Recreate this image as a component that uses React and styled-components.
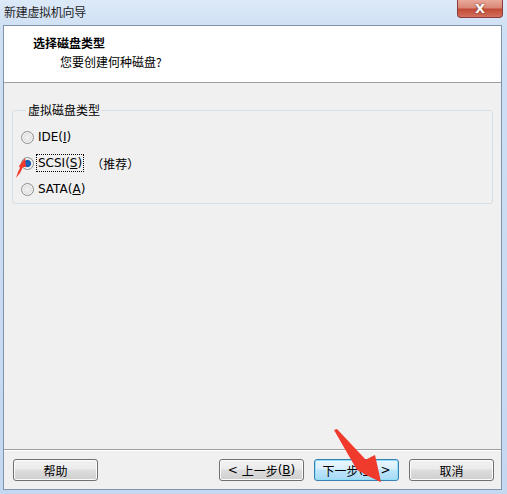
import React from "react";
import styled, { createGlobalStyle } from "styled-components";

const Global = createGlobalStyle`
  html, body { margin: 0; padding: 0; }
  body { width: 507px; height: 494px; overflow: hidden; background: #c9ddf3; }
`;

const cn = `"Noto Sans CJK SC", "Liberation Sans", sans-serif`;
const lat = `"DejaVu Sans", "Liberation Sans", "Noto Sans CJK SC", sans-serif`;

const Window = styled.div`
  position: relative;
  width: 507px;
  height: 494px;
  box-sizing: border-box;
  display: flex;
  flex-direction: column;
  padding: 0 5px 4px 3px;
  background: linear-gradient(180deg, #dce9f8 0px, #cfe0f4 30px, #c4d8f0 100%);
  font-family: ${cn};
  font-size: 12px;
  color: #000;
`;

const TitleBar = styled.div`
  height: 25px;
  display: flex;
  align-items: flex-start;
  justify-content: space-between;
`;

const TitleText = styled.span`
  margin: 4px 0 0 1px;
  font-size: 12px;
  line-height: 16px;
  color: #1e1e1e;
  letter-spacing: -0.3px;
`;

const CloseBtn = styled.div`
  width: 46px;
  height: 18px;
  margin-right: -1px;
  box-sizing: border-box;
  border: 1px solid #8a3c3c;
  border-top: none;
  border-radius: 0 0 4px 4px;
  background: linear-gradient(180deg, #e9a99c 0%, #d98877 45%, #c24a36 55%, #d2705e 100%);
  display: flex;
  align-items: center;
  justify-content: center;
  color: #fff;
  font-family: ${lat};
  font-weight: bold;
  font-size: 13px;
  text-shadow: 0 0 2px #5a1a10;
`;

const Client = styled.div`
  flex: 1;
  display: flex;
  flex-direction: column;
  border: 1px solid #7f93ad;
  background: #f0f0f0;
`;

const Header = styled.div`
  height: 56px;
  background: #fff;
  border-bottom: 1px solid #a0a0a0;
  display: flex;
  flex-direction: column;
`;

const HeaderTitle = styled.div`
  margin: 8px 0 0 29px;
  font-weight: bold;
  font-size: 12px;
  line-height: 17px;
`;

const HeaderSub = styled.div`
  margin: 2px 0 0 56px;
  font-size: 12px;
  line-height: 17px;
`;

const Body = styled.div`
  flex: 1;
  padding: 20px 8px 0 8px;
`;

const GroupBox = styled.fieldset`
  margin: 0;
  padding: 11px 0 5px 8px;
  box-sizing: border-box;
  border: 1px solid #d5dfe5;
  border-radius: 3px;
  display: flex;
  flex-direction: column;
  gap: 8px;
`;

const Legend = styled.legend`
  padding: 0 2px;
  margin-left: 5px;
  font-size: 12px;
  line-height: 14px;
`;

const Option = styled.div`
  display: flex;
  align-items: center;
  height: 18px;
`;

const Radio = styled.span`
  width: 11px;
  height: 11px;
  border-radius: 50%;
  border: 1px solid #8e8f8f;
  background: radial-gradient(circle at 50% 50%, ${p => p.$on ? "#1e6fc6 0, #0e55a8 3px, #dfe4e8 4px" : "#f4f4f4 0, #e2e2e2 4px"}, #cfcfcf 100%);
  box-shadow: inset 0 0 0 1px #f7f7f7;
  flex: none;
`;

const Label = styled.span`
  margin-left: 3px;
  padding: 0 1px;
  font-family: ${lat};
  font-size: 12px;
  line-height: 16px;
  outline: ${p => p.$focus ? "1px dotted #000" : "none"};
  u { text-decoration: underline; }
`;

const Note = styled.span`
  margin-left: 8px;
  font-size: 12px;
`;

const Footer = styled.div`
  border-top: 1px solid #a0a0a0;
  box-shadow: inset 0 1px 0 #fff;
  display: flex;
  align-items: center;
  padding: 9px 7px 8px 9px;
`;

const Button = styled.div`
  width: 85px;
  height: 22px;
  box-sizing: border-box;
  border: 1px solid ${p => p.$def ? "#3c7fb1" : "#707070"};
  border-radius: 3px;
  background: ${p => p.$def
    ? "linear-gradient(180deg, #eaf6fd 0%, #d9f0fc 45%, #bee6fd 50%, #a7d9f5 100%)"
    : "linear-gradient(180deg, #f2f2f2 0%, #ebebeb 45%, #dddddd 50%, #cfcfcf 100%)"};
  box-shadow: inset 0 0 0 1px ${p => p.$def ? "#8fe0f9" : "#fcfcfc"};
  display: flex;
  align-items: center;
  justify-content: center;
  font-size: 12px;
  margin-left: ${p => p.$ml || 0}px;
  white-space: pre;
  span.l { font-family: ${lat}; }
`;

const Spacer = styled.div`flex: 1;`;

const Overlay = styled.svg`
  position: absolute;
  left: 0;
  top: 0;
  pointer-events: none;
`;

export default function App() {
  return (
    <>
      <Global />
      <Window>
        <TitleBar>
          <TitleText>新建虚拟机向导</TitleText>
          <CloseBtn>X</CloseBtn>
        </TitleBar>
        <Client>
          <Header>
            <HeaderTitle>选择磁盘类型</HeaderTitle>
            <HeaderSub>您要创建何种磁盘?</HeaderSub>
          </Header>
          <Body>
            <GroupBox>
              <Legend>虚拟磁盘类型</Legend>
              <Option>
                <Radio />
                <Label>IDE(<u>I</u>)</Label>
              </Option>
              <Option>
                <Radio $on />
                <Label $focus>SCSI(<u>S</u>)</Label>
                <Note>（推荐）</Note>
              </Option>
              <Option>
                <Radio />
                <Label>SATA(<u>A</u>)</Label>
              </Option>
            </GroupBox>
          </Body>
          <Footer>
            <Button>帮助</Button>
            <Spacer />
            <Button><span className="l">&lt; </span>上一步<span className="l">(<u>B</u>)</span></Button>
            <Button $def $ml={10}>下一步<span className="l">(<u>N</u>) &gt;</span></Button>
            <Button $ml={10}>取消</Button>
          </Footer>
        </Client>
        <Overlay width="507" height="494" viewBox="0 0 507 494">
          <polygon points="16,178 18,172 20,168 19,166 25,158 26,167 23,167 20,173" fill="#f03a2c" />
          <polygon points="334,430 337,429 366,460 362,463 369,465 381,482 364,474 361,468 357,470" fill="#f03a2c" />
          <polygon points="357,470 361,462 375,455 381,482" fill="#f03a2c" />
        </Overlay>
      </Window>
    </>
  );
}
